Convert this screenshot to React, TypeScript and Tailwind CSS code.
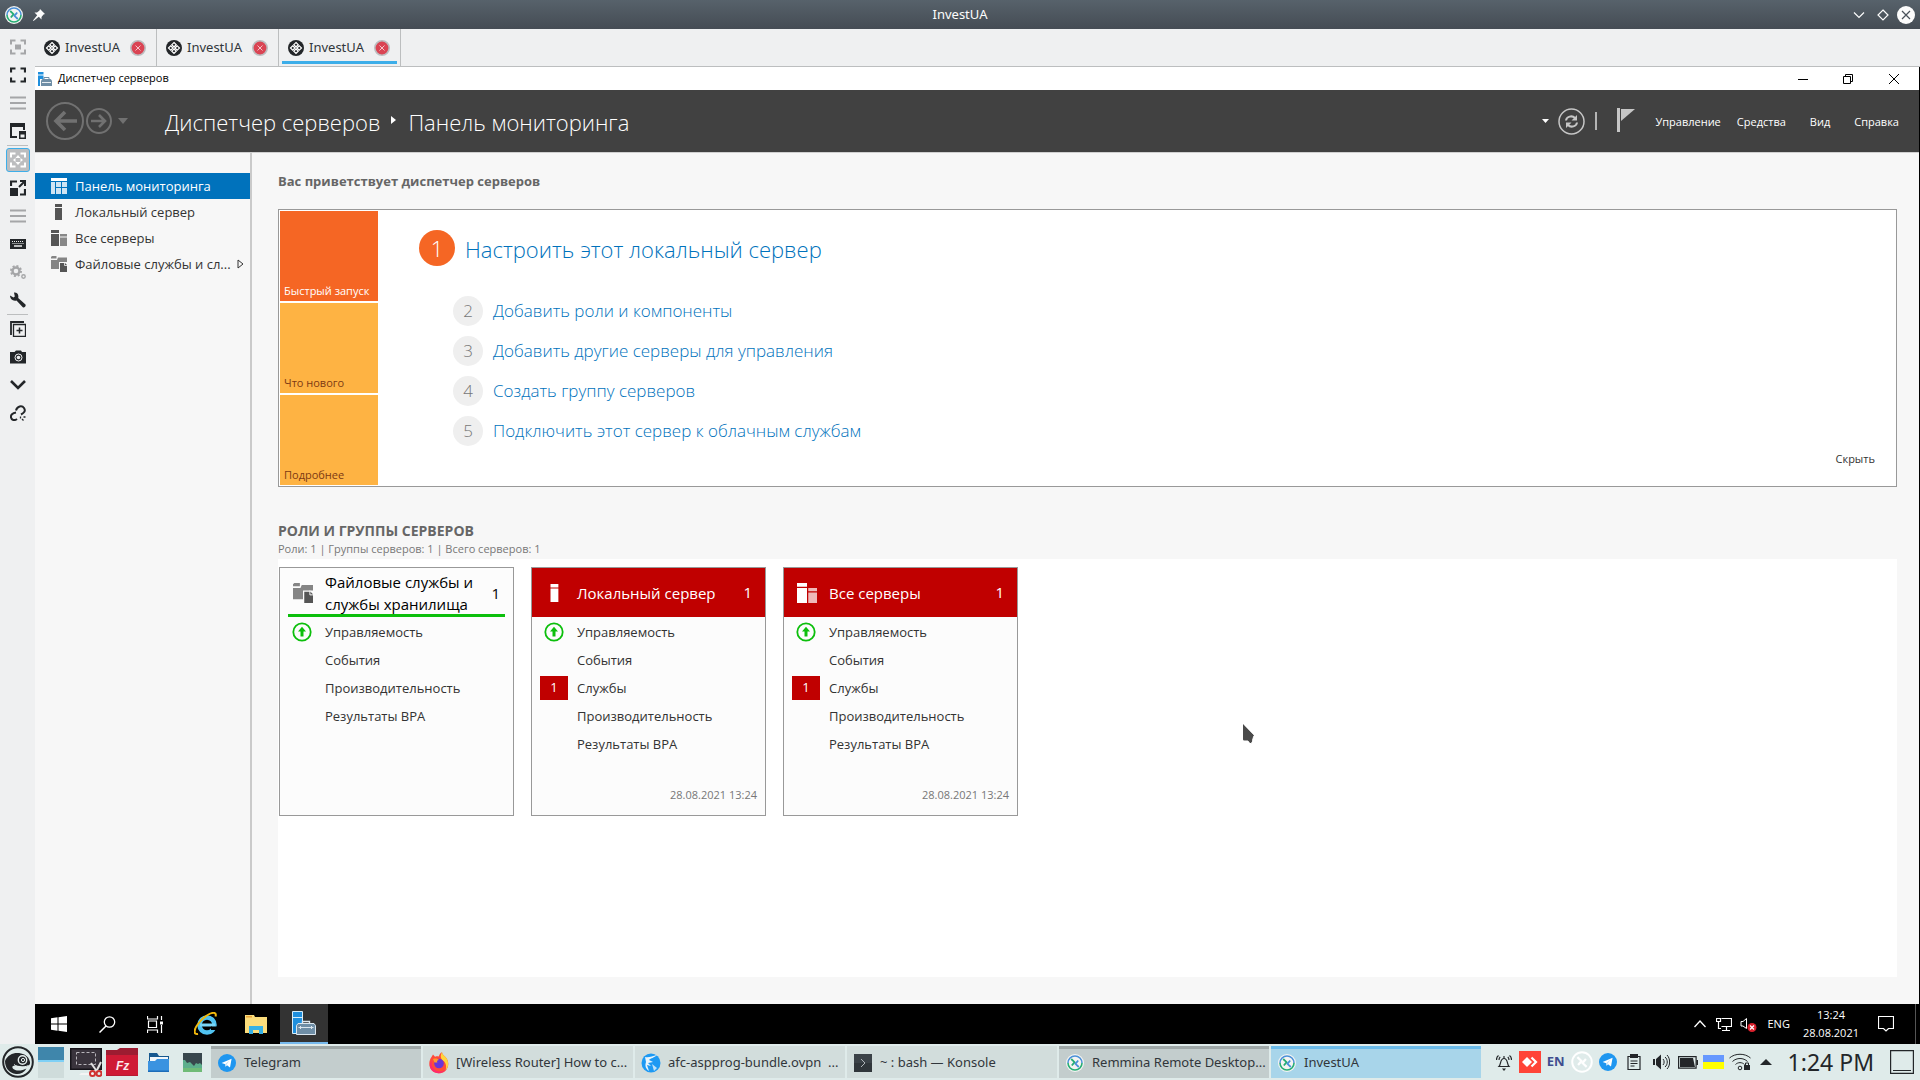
import type { ReactNode } from 'react';

const dark = '#232629';

function Svg({ w = 16, h, box, className, children }: { w?: number; h?: number; box?: string; className?: string; children: ReactNode }) {
    const height = h ?? w;
    return (
        <svg width={w} height={height} viewBox={box ?? `0 0 ${w} ${height}`} fill="none" className={`block shrink-0 ${className ?? ''}`} aria-hidden="true">
            {children}
        </svg>
    );
}

/* ---------- logos ---------- */

function RemminaLogo({ size = 18, mono = false }: { size?: number; mono?: boolean }) {
    return (
        <Svg w={size} box="0 0 18 18">
            {mono ? (
                <circle cx="9" cy="9" r="8" stroke="#fff" strokeWidth="1.6" />
            ) : (
                <>
                    <circle cx="9" cy="9" r="9" fill="#f4f4f2" />
                    <path d="M2 9a7 7 0 0 1 14 0" stroke="#4a90d9" strokeWidth="1.6" />
                    <path d="M2 9a7 7 0 0 0 14 0" stroke="#27ae75" strokeWidth="1.6" />
                </>
            )}
            <path d="M5.200 5 8.600 8.200 5.800 11.500" stroke={mono ? '#fff' : '#27ae75'} strokeWidth="1.8" />
            <path d="M12.200 6.500 9.400 9.800l3.400 3.200" stroke={mono ? '#fff' : '#4a90d9'} strokeWidth="1.8" />
        </Svg>
    );
}

function TelegramLogo({ size = 18 }: { size?: number }) {
    return (
        <Svg w={size} box="0 0 18 18">
            <circle cx="9" cy="9" r="9" fill="#1e96f0" />
            <path d="M3.6 8.9 13.6 4.8 12 13.4 9 11.2 7.6 12.8 7.2 10.2z" fill="#fff" />
            <path d="M7.2 10.2 11.6 6.6 8.4 10.8 7.6 12.8z" fill="#bcdcf5" />
        </Svg>
    );
}

function FirefoxLogo() {
    return (
        <Svg w={22} box="0 0 22 22">
            <path d="M3.5 5 5 2.6l2 2.2C9 4 10 4.300 11 4.500 11 3 12 1 14 .2c.2 2.500 2.500 3.500 4.500 6 3 4.500 2 10-1.500 13-4 3-10 2.600-13-.6C.6 15.200.4 9 3.500 5z" fill="#ff4b3a" />
            <path d="M14 .2c.2 2.500 2.500 3.500 4.500 6 2.600 4 2 9-.8 12 1-4 .3-8-3.200-10C13 7 11.800 3.500 14 .2z" fill="#ffd53d" />
            <path d="M4 8C2.500 13 5 17.500 9 19c3 1 6.500.4 9-1.500-3 4-9 5-13.500 1.500C1 16 1 11 4 8z" fill="#ff2a6d" />
            <circle cx="11" cy="11.500" r="4.800" fill="#6a35d8" />
            <path d="M5 7c3-1 5 0 6 1-2 0-2.500 1.500-1.500 2.500H6.500z" fill="#ff9a2b" />
        </Svg>
    );
}

function FalkonLogo() {
    return (
        <Svg w={20} box="0 0 20 20">
            <circle cx="10" cy="10" r="9.500" fill="#1d99f3" />
            <path d="M4 4c4 1 7-1 12-2-3 3-6 3-8 5l4 2-5 1 3 3-4-1 2 6c-4-3-4-6-3-9z" fill="#e8f4fc" />
            <path d="M11 11l5 4-3 3z" fill="#bfe2fa" />
        </Svg>
    );
}

function KonsoleLogo() {
    return (
        <Svg w={18} box="0 0 18 18">
            <path d="M0 0h18v18H0z" fill="#3b4248" />
            <path d="M0 9h18v9H0z" fill="#30363b" />
            <path d="m7 5 4 4-4 4" stroke="#aeb4b8" />
        </Svg>
    );
}

function ServerManagerLogo({ size = 24 }: { size?: number }) {
    return (
        <Svg w={size} box="0 0 24 24">
            <path d="M.5.500h10v22H.500z" fill="#1f8fdd" stroke="#d8eefa" />
            <path d="M1 6.500h9" stroke="#d8eefa" />
            <path d="M4.500 14.500 6 12.500h16l1.500 2v9h-19z" fill="#6f8ea6" stroke="#dbe6ee" />
            <path d="M10.500 12.500v-2h7v2" stroke="#dbe6ee" strokeWidth="1.400" />
            <path d="M6.500 16.500h15M8.500 15v3M19.500 15v3" stroke="#dbe6ee" />
        </Svg>
    );
}

/* ---------- server manager icons ---------- */

function DashboardIcon() {
    return (
        <Svg w={16}>
            <path d="M0 0h16v3H0z" fill="#fff" />
            <path d="M0 4h4v12H0zM5 4h5v5H5zM11 4h5v5h-5zM5 10h5v6H5zM11 10h5v6h-5z" fill="#cfe4f3" />
        </Svg>
    );
}

function ServerIcon({ size = 16, color = '#555' }: { size?: number; color?: string }) {
    return (
        <Svg w={size} box="0 0 16 16">
            <path d="M4 0h7v3H4zM4 4h7v12H4z" fill={color} />
        </Svg>
    );
}

function ServersIcon({ size = 16, color = '#555', second = '#888' }: { size?: number; color?: string; second?: string }) {
    return (
        <Svg w={size} box="0 0 16 16">
            <path d="M0 0h8v3H0zM0 4h8v12H0z" fill={color} />
            <path d="M9 4h7v2.500H9zM9 7.500h7V16H9z" fill={second} />
        </Svg>
    );
}

function FilesIcon({ size = 16 }: { size?: number }) {
    return (
        <Svg w={size} box="0 0 16 16">
            <path d="M0 1l1-1h4.500v2.500H0zM0 4h6l1-2.500h9V6H8v7H0z" fill="#858585" />
            <path d="M9 7h5l2 2v7H9z" fill="#555" />
            <path d="M13.500 6v3.500H16" stroke="#f5f5f5" strokeWidth=".8" />
        </Svg>
    );
}

function StatusUp() {
    return (
        <Svg w={20}>
            <circle cx="10" cy="10" r="8.700" stroke="#0cbf0c" strokeWidth="1.800" />
            <path d="M10 4.800 14 9.500h-2.500V14.500h-3V9.500H6z" fill="#0cbf0c" />
        </Svg>
    );
}

/* ---------- remote viewer chrome ---------- */

function TitleBar() {
    return (
        <header className="grid h-[29px] shrink-0 grid-cols-[1fr_auto_1fr] items-center bg-linear-to-b from-[#57626b] to-[#454c54] px-[5px] text-[#fcfcfc]">
            <div className="flex items-center gap-2.5">
                <RemminaLogo />
                <button aria-label="Keep above">
                    <Svg w={12}>
                        <path d="m7 0 5 5-1.500.5L8.500 8v2.500L5.800 7.800.5 12l-.5-.5L4.200 6.200 1.500 3.500H4L6.500 1.500z" fill="#fcfcfc" />
                    </Svg>
                </button>
            </div>
            <h1 className="text-[13px]">InvestUA</h1>
            <div className="flex items-center justify-end">
                <button aria-label="Minimize">
                    <Svg w={12}><path d="m1 3.500 5 5 5-5" stroke="#fcfcfc" strokeWidth="1.200" /></Svg>
                </button>
                <button aria-label="Maximize" className="mr-2 ml-3">
                    <Svg w={12}><path d="m6 1 5 5-5 5-5-5z" stroke="#fcfcfc" strokeWidth="1.200" /></Svg>
                </button>
                <button aria-label="Close">
                    <Svg w={18}>
                        <circle cx="9" cy="9" r="9" fill="#fcfcfc" />
                        <path d="m5 5 8 8m0-8-8 8" stroke="#4a525a" strokeWidth="1.200" />
                    </Svg>
                </button>
            </div>
        </header>
    );
}

const corners = 'M1 5.500V1.500h4.500M10.500 1.500H15v4M15 10.500v4h-4.500M5.500 14.500H1v-4';

function Lines() {
    return <Svg><path d="M0 2.500h16M0 8h16M0 13.500h16" stroke="#a5a6a8" strokeWidth="2.200" /></Svg>;
}

const toolsTop = [
    { label: 'Fit window', icon: <Svg><path d={corners} stroke="#a5a6a8" strokeWidth="2" /><path d="M5 5.500h6v5H5z" fill="#a5a6a8" /></Svg> },
    { label: 'Fullscreen', icon: <Svg><path d={corners} stroke={dark} strokeWidth="2.200" /></Svg> },
    { label: 'Multi monitor', icon: <Lines /> },
    { label: 'Dynamic resolution', icon: <Svg><path d="M0 0h15v4H0z" fill={dark} /><path d="M1 4v10h6M14 4v3" stroke={dark} strokeWidth="2" /><path d="M9 8h7v8H9z" fill={dark} /><path d="M10.500 11.500h4v3h-4z" fill="#eff0f1" /></Svg> },
];

const toolsMiddle = [
    { label: 'Scaled mode', icon: <Svg><path d={corners} stroke="#fff" strokeWidth="2" /><path d="M8 3l2.500 3h-5zM8 13l2.500-3h-5zM3 8l2.500-2v4zM13 8l-2.500-2v4z" fill="#fff" /></Svg>, active: true },
    { label: 'Grab keyboard', icon: <Svg><path d="M0 8h8v8H0z" fill={dark} /><path d="M1 6V1.500h6M15 9v5.500h-5" stroke={dark} strokeWidth="2.200" /><path d="m9 7 5.500-5.500M10 1h5v5" stroke={dark} strokeWidth="2" /></Svg> },
    { label: 'Preferences', icon: <Lines /> },
    { label: 'Keyboard', icon: <Svg><path d="M0 3h16v10H0z" fill={dark} /><path d="M2 5.500h12M2.500 7.500h11" stroke="#eff0f1" strokeDasharray="1 1" /><path d="M4 10h8" stroke="#eff0f1" strokeWidth="1.500" /></Svg> },
    { label: 'Plugins', icon: <Svg><circle cx="6" cy="7" r="3.500" stroke="#a5a6a8" strokeWidth="2.400" /><circle cx="6" cy="7" r="5" stroke="#a5a6a8" strokeWidth="2" strokeDasharray="2 1.900" /><circle cx="13.500" cy="12.500" r="1.700" stroke="#a5a6a8" strokeWidth="1.400" /></Svg> },
    { label: 'Tools', icon: <Svg><path d="M0 3.500 3.500 5.500 4.800 4.500 4 .5C7 .2 9 2.500 8.200 6l7.300 6.500c.8 1.500-1 3.500-2.700 2.700L6.500 8.500C3 9.500 0 7 0 3.500z" fill={dark} /></Svg> },
];

const toolsBottom = [
    { label: 'Duplicate', icon: <Svg><path d="M3.500 3.500h12v12h-12z" stroke={dark} strokeWidth="1.300" /><path d="M1 14V1h13" stroke={dark} strokeWidth="1.800" /><path d="M9.500 6.500v6M6.500 9.500h6" stroke={dark} strokeWidth="1.500" /></Svg> },
    { label: 'Screenshot', icon: <Svg><path d="M0 3h4.500L6 1.500h5L12 3h4v11.500H0z" fill={dark} /><circle cx="8.500" cy="8.500" r="3.500" stroke="#eff0f1" /><circle cx="8.500" cy="8.500" r="1.800" fill="#eff0f1" /></Svg> },
    { label: 'Minimize window', icon: <Svg><path d="m1 4 7 7 7-7" stroke={dark} strokeWidth="2.600" /></Svg> },
    { label: 'Disconnect', icon: <Svg><path d="M6 5.500C7 1 12 0 14 3s0 5-3 6.500M7 14C4.500 16 1.500 15 1 12.500S2.500 8 6 7.500" stroke={dark} strokeWidth="2" /><path d="M10.500 11.500v2M12 14l1.500 1.500M13.500 12h2" stroke={dark} strokeWidth="1.300" /></Svg> },
];

type Tool = { label: string; icon: ReactNode; active?: boolean };

function ToolGroup({ tools }: { tools: Tool[] }) {
    return (
        <>
            {tools.map(tool => (
                <div key={tool.label} className="flex h-7 items-center justify-center">
                    <button
                        aria-label={tool.label}
                        className={tool.active ? 'rounded-[3px] border border-[#3daee9] bg-[#bcbdbf] p-[3px]' : 'p-1'}
                    >
                        {tool.icon}
                    </button>
                </div>
            ))}
        </>
    );
}

function Toolbar() {
    return (
        <aside className="w-[35px] shrink-0 bg-[#eff0f1] pt-1">
            <ToolGroup tools={toolsTop} />
            <hr className="mx-[7px] border-[#bcbebf]" />
            <ToolGroup tools={toolsMiddle} />
            <hr className="mx-[7px] border-[#bcbebf]" />
            <ToolGroup tools={toolsBottom} />
        </aside>
    );
}

function ConnectionTabs() {
    return (
        <nav className="flex h-[38px] shrink-0 border-b border-[#bcbebf] bg-[#eff0f1]">
            {[0, 1, 2].map(tab => (
                <div key={tab} className="relative flex w-[122px] items-center border-r border-[#bcbebf] pt-px pl-[9px]">
                    <button className="flex items-center gap-[5px] text-[13px] text-[#31363b]">
                        <Svg w={16}>
                            <circle cx="8" cy="8" r="8" fill={dark} />
                            <path d="m8 2.500 2.200 2.200L8 7 5.800 4.700zM8 9l2.200 2.200L8 13.500l-2.200-2.300zM2.500 8l2.200-2.200L7 8l-2.300 2.200zM9 8l2.200-2.200L13.500 8l-2.300 2.200z" stroke="#fff" strokeWidth="1.200" />
                        </Svg>
                        InvestUA
                    </button>
                    <button aria-label="Close tab" className="ml-[10px]">
                        <Svg w={16}>
                            <circle cx="8" cy="8" r="7.200" fill="#da4453" stroke="#bcbec0" strokeWidth="1.600" />
                            <path d="m5.500 5.500 5 5m0-5-5 5" stroke="#f6c5ca" />
                        </Svg>
                    </button>
                    {tab === 2 && <span className="absolute right-[3px] bottom-[2px] left-[3px] h-[3px] bg-[#3daee9]" />}
                </div>
            ))}
        </nav>
    );
}

/* ---------- server manager window ---------- */

function WindowTitle() {
    return (
        <div className="flex h-[23px] shrink-0 items-center bg-white pl-[3px] text-black">
            <Svg w={14}>
                <path d="M0 0h5.500v2.500H0zM0 3.500h5.500V14H0z" fill="#1f8fdd" />
                <path d="M2 7h12v7H2z" fill="#fff" />
                <path d="M3 8.500 4.500 7h8L14 8.500V14H3z" fill="#6f8ea6" />
                <path d="M6 7V5.500h5V7" stroke="#6f8ea6" />
                <path d="M4 10.500h9" stroke="#e6edf2" />
            </Svg>
            <h2 className="ml-1.5 text-[11px]">Диспетчер серверов</h2>
            <div className="ml-auto flex items-center pr-5">
                <button aria-label="Свернуть" className="mr-[35px]"><Svg w={10}><path d="M0 5.500h10" stroke="#000" /></Svg></button>
                <button aria-label="Восстановить" className="mr-[36px]"><Svg w={10}><path d="M.5 2.500h7v7h-7zM2.500 2.500V.500h7v7h-2" stroke="#000" /></Svg></button>
                <button aria-label="Закрыть"><Svg w={10}><path d="m0 0 10 10M10 0 0 10" stroke="#000" /></Svg></button>
            </div>
        </div>
    );
}

function Ribbon() {
    return (
        <div className="flex h-[62px] shrink-0 items-center bg-[#414141] text-white">
            <div className="flex w-[130px] items-center gap-0.5 pl-[11px]">
                <button aria-label="Назад">
                    <Svg w={38}>
                        <circle cx="19" cy="19" r="18" stroke="#717171" strokeWidth="2" />
                        <path d="M31 19H10m9-9-9 9 9 9" stroke="#717171" strokeWidth="3.600" />
                    </Svg>
                </button>
                <button aria-label="Вперед">
                    <Svg w={26}>
                        <circle cx="13" cy="13" r="12" stroke="#717171" strokeWidth="2" />
                        <path d="M5 13h14m-6-6 6 6-6 6" stroke="#717171" strokeWidth="2.600" />
                    </Svg>
                </button>
                <button aria-label="Журнал" className="ml-1">
                    <Svg w={10} h={6}><path d="M0 0h10L5 6z" fill="#717171" /></Svg>
                </button>
            </div>
            <div className="flex items-center pt-0.5 text-[22px] font-light">
                <a href="#manager">Диспетчер серверов</a>
                <Svg w={6} h={8} className="mx-[11px] mb-1"><path d="m0 0 5 4-5 4z" fill="#fff" /></Svg>
                <a href="#dashboard">Панель мониторинга</a>
            </div>
            <div className="ml-auto flex items-center text-[11px]">
                <button aria-label="Список"><Svg w={8} h={4}><path d="M0 0h7L3.500 4z" fill="#fff" /></Svg></button>
                <button aria-label="Обновить" className="ml-2">
                    <Svg w={27}>
                        <circle cx="13.500" cy="13.500" r="12.500" stroke="#c6c6c6" strokeWidth="1.500" />
                        <path d="M8 12.500c.5-4 6-5.500 9-2.500M19 14.500c-.5 4-6 5.500-9 2.500" stroke="#c6c6c6" strokeWidth="2" />
                        <path d="M19 7v5.500h-5.500zM8 20v-5.500h5.500z" fill="#c6c6c6" />
                    </Svg>
                </button>
                <span className="ml-[10px] h-[18px] w-[2px] bg-[#b4b4b4]" />
                <button aria-label="Уведомления" className="ml-5">
                    <Svg w={18} h={26}>
                        <path d="M0 0h3v24H0z" fill="#c6c6c6" />
                        <path d="M4 1h14L4 13z" fill="#c6c6c6" />
                    </Svg>
                </button>
                <div className="flex gap-4 pt-0.5 pr-5 pl-5">
                    <button>Управление</button>
                    <button>Средства</button>
                    <button className="mx-2">Вид</button>
                    <button>Справка</button>
                </div>
            </div>
        </div>
    );
}

function Sidebar() {
    const items = [
        { label: 'Панель мониторинга', icon: <DashboardIcon />, active: true },
        { label: 'Локальный сервер', icon: <ServerIcon /> },
        { label: 'Все серверы', icon: <ServersIcon /> },
        { label: 'Файловые службы и сл...', icon: <FilesIcon />, more: true },
    ];
    return (
        <nav className="w-[217px] shrink-0 border-r-2 border-[#cacaca] pt-5">
            {items.map(item => (
                <a
                    key={item.label}
                    href="#"
                    className={`flex h-[26px] items-center pl-4 text-[13px] whitespace-nowrap ${item.active ? 'bg-[#0072bc] text-white' : 'text-[#333]'}`}
                >
                    {item.icon}
                    <span className="ml-2 pt-0.5">{item.label}</span>
                    {item.more && <Svg w={7} h={10} className="ml-1.5"><path d="M1 1v8l5-4z" stroke="#333" /></Svg>}
                </a>
            ))}
        </nav>
    );
}

function Welcome() {
    const tiles = [
        { label: 'Быстрый запуск', style: 'bg-[#f56624] text-white' },
        { label: 'Что нового', style: 'bg-[#feb343] text-[#7d3a13]' },
        { label: 'Подробнее', style: 'bg-[#feb343] text-[#7d3a13]' },
    ];
    const steps = ['Добавить роли и компоненты', 'Добавить другие серверы для управления', 'Создать группу серверов', 'Подключить этот сервер к облачным службам'];
    return (
        <section className="flex border border-[#999] bg-white p-px">
            <div className="flex flex-col gap-0.5">
                {tiles.map(tile => (
                    <button key={tile.label} className={`flex h-[90px] w-[98px] items-end px-1 pb-0.5 text-[11px] whitespace-nowrap ${tile.style}`}>
                        {tile.label}
                    </button>
                ))}
            </div>
            <ol className="grow pt-[19px] pl-[41px] font-light text-[#0072bc]">
                <li className="mb-[30px] flex h-9 items-center gap-[10px] text-[22px]">
                    <span className="grid size-9 place-items-center rounded-full bg-[#f56624] text-white">1</span>
                    <a href="#step1" className="pt-0.5">Настроить этот локальный сервер</a>
                </li>
                {steps.map((step, i) => (
                    <li key={step} className="mb-[10px] flex h-[30px] items-center gap-[10px] pl-[34px] text-[17px]">
                        <span className="grid size-[30px] place-items-center rounded-full bg-[#efefef] text-[#777]">{i + 2}</span>
                        <a href="#step">{step}</a>
                    </li>
                ))}
            </ol>
            <button className="self-end pr-5 pb-[18px] text-[11px] text-[#333]">Скрыть</button>
        </section>
    );
}

type Row = { label: string; status?: 'up' | number };

const fileRows: Row[] = [{ label: 'Управляемость', status: 'up' }, { label: 'События' }, { label: 'Производительность' }, { label: 'Результаты BPA' }];
const serverRows: Row[] = [{ label: 'Управляемость', status: 'up' }, { label: 'События' }, { label: 'Службы', status: 1 }, { label: 'Производительность' }, { label: 'Результаты BPA' }];

const cards = [
    { title: 'Файловые службы и службы хранилища', icon: <FilesIcon size={20} />, rows: fileRows },
    { title: 'Локальный сервер', icon: <ServerIcon size={18} color="#fff" />, rows: serverRows, alert: true, time: '28.08.2021 13:24' },
    { title: 'Все серверы', icon: <ServersIcon size={20} color="#fff" second="#efb9b9" />, rows: serverRows, alert: true, time: '28.08.2021 13:24' },
];

function RoleCard({ card }: { card: (typeof cards)[number] }) {
    return (
        <article className="flex h-[249px] w-[235px] flex-col border border-[#999] bg-[#fcfcfc]">
            <header className={card.alert ? 'bg-[#c00000] px-2 text-white' : 'px-2 text-black'}>
                <div className={`flex h-[49px] items-center ${card.alert ? '' : 'border-b-[3px] border-[#0cbf0c] pt-1'}`}>
                    <span className="flex w-[30px] justify-center">{card.icon}</span>
                    <h4 className="ml-[7px] w-[155px] text-[15px] leading-[22px]">{card.title}</h4>
                    <span className="ml-auto pr-[5px] text-[15px]">1</span>
                </div>
            </header>
            <ul className="pt-px text-[13px] text-[#333]">
                {card.rows.map(row => (
                    <li key={row.label} className="flex h-7 items-center px-2">
                        <span className="flex w-7 justify-center">
                            {row.status === 'up' && <StatusUp />}
                            {typeof row.status === 'number' && <span className="grid h-6 w-7 place-items-center bg-[#c00000] text-white">{row.status}</span>}
                        </span>
                        <a href="#row" className="ml-[9px] pt-0.5">{row.label}</a>
                    </li>
                ))}
            </ul>
            {card.time && <time className="mt-auto self-end pr-2 pb-3 text-[11px] text-[#777]">{card.time}</time>}
        </article>
    );
}

function Dashboard() {
    return (
        <main className="flex grow flex-col pt-[18px] pr-[22px] pb-[27px] pl-[26px]">
            <h3 className="text-[13px] leading-5 font-bold text-[#666]">Вас приветствует диспетчер серверов</h3>
            <div className="mt-[18px]">
                <Welcome />
            </div>
            <h3 className="mt-[34px] text-[14px] leading-5 font-bold text-[#666]">РОЛИ И ГРУППЫ СЕРВЕРОВ</h3>
            <p className="text-[11px] leading-4 text-[#777]">Роли: 1 | Группы серверов: 1 | Всего серверов: 1</p>
            <section className="relative mt-[2px] flex grow items-start gap-[17px] bg-white px-px py-2">
                {cards.map(card => <RoleCard key={card.title} card={card} />)}
                <Svg w={14} h={22} className="absolute top-[164px] left-[964px]">
                    <path d="M1 1v17h5l3 3 1.500-3.500L12 12z" fill="#4a4a4a" stroke="#fff" />
                    <path d="M1 1v16l4-1 3 4 2-1-.5-4 2.500-2.500z" fill="#4a4a4a" />
                </Svg>
            </section>
        </main>
    );
}

function WindowsTaskbar() {
    return (
        <footer className="flex h-10 shrink-0 items-center bg-black text-[11px] text-white">
            <button aria-label="Пуск" className="grid h-10 w-12 place-items-center">
                <Svg w={16}><path d="M0 2.200 6.500 1.300v6.200H0zM7.500 1.200 16 0v7.500H7.500zM0 8.500h6.500v6.200L0 13.800zM7.500 8.500H16V16l-8.500-1.200z" fill="#fff" /></Svg>
            </button>
            <button aria-label="Поиск" className="grid h-10 w-12 place-items-center">
                <Svg w={17}><circle cx="10.500" cy="6" r="5.200" stroke="#fff" strokeWidth="1.300" /><path d="m7 10-6.500 6.500" stroke="#fff" strokeWidth="1.500" /></Svg>
            </button>
            <button aria-label="Представление задач" className="grid h-10 w-12 place-items-center">
                <Svg w={17}><path d="M.5 0v3h10V0M.5 17v-3h10v3M1.500 5h8v6.500h-8zM14.500 0v4M14.500 9v8" stroke="#fff" strokeWidth="1.200" /><path d="M13 5.500h3v3h-3z" fill="#fff" /></Svg>
            </button>
            <button aria-label="Internet Explorer" className="grid h-10 w-[53px] place-items-center">
                <Svg w={24}>
                    <circle cx="13" cy="13" r="7.500" stroke="#51c3f1" strokeWidth="4.500" />
                    <path d="M6 13h15" stroke="#7ad6f7" strokeWidth="3" />
                    <path d="M17 14.500h7v3.500h-7z" fill="#000" />
                    <path d="M4 22C-1 23 0 17 4 12 9 5 17 0 20.500 1c1.500.5 1.500 2 1 3.500" stroke="#f2b90c" strokeWidth="2" />
                </Svg>
            </button>
            <button aria-label="Проводник" className="grid h-10 w-12 place-items-center">
                <Svg w={22} h={19}>
                    <path d="M0 0h9l1 2h12v16H0z" fill="#fbdd7c" />
                    <path d="M1 1h6v1.500H1z" fill="#e8a33a" />
                    <path d="M4 19v-8h14v8h-4v-4H8v4z" fill="#36b1e6" />
                </Svg>
            </button>
            <button aria-label="Диспетчер серверов" className="grid h-10 w-12 place-items-center border-b-2 border-[#76b9ed] bg-[#333]">
                <ServerManagerLogo />
            </button>
            <div className="ml-auto flex items-center">
                <button aria-label="Скрытые значки"><Svg w={12} h={8}><path d="m.5 7 5.500-6 5.500 6" stroke="#fff" strokeWidth="1.300" /></Svg></button>
                <Svg w={16} h={15} className="ml-[10px]"><path d="M5.500 1.500h10v8h-10M10.500 9.500v4M6 13.500h8M.5 1.500h4v3h-4zM2.500 4.500v7H5" stroke="#fff" strokeWidth="1.200" /></Svg>
                <Svg w={17} h={15} className="ml-2">
                    <path d="M6.500 1.500v10L3 9H1V4.500h2z" stroke="#fff" />
                    <circle cx="12" cy="10.500" r="4.500" fill="#d9202c" />
                    <path d="m10 8.500 4 4m0-4-4 4" stroke="#fff" strokeWidth="1.200" />
                </Svg>
                <button className="ml-2.5">ENG</button>
                <time className="ml-[13px] text-center leading-[18px]">
                    13:24
                    <br />
                    28.08.2021
                </time>
                <button aria-label="Центр уведомлений" className="ml-[19px]">
                    <Svg w={16}><path d="M.5.500h15v12h-5L8 15l-2.500-2.500h-5z" stroke="#fff" strokeWidth="1.200" /></Svg>
                </button>
                <span className="ml-[21px] h-10 w-px bg-[#555]" />
                <span className="w-1" />
            </div>
        </footer>
    );
}

/* ---------- desktop panel ---------- */

const tasks = [
    { title: 'Telegram', icon: <TelegramLogo />, style: 'bg-[#c3cdcd] border-[#9fa8a8]' },
    { title: '[Wireless Router] How to c...', icon: <FirefoxLogo />, style: 'bg-[#d2dddc] border-[#d2dddc]' },
    { title: 'afc-aspprog-bundle.ovpn  ...', icon: <FalkonLogo />, style: 'bg-[#d2dddc] border-[#d2dddc]' },
    { title: '~ : bash — Konsole', icon: <KonsoleLogo />, style: 'bg-[#d2dddc] border-[#d2dddc]' },
    { title: 'Remmina Remote Desktop...', icon: <RemminaLogo />, style: 'bg-[#c3cdcd] border-[#9fa8a8]' },
    { title: 'InvestUA', icon: <RemminaLogo />, style: 'bg-[#a8d5ea] border-[#6bbceb]' },
];

function Launchers() {
    return (
        <div className="flex h-9 w-[211px] shrink-0 items-center pl-[2px]">
            <button aria-label="Application menu">
                <Svg w={32}>
                    <circle cx="16" cy="16" r="14.800" stroke={dark} strokeWidth="2" />
                    <path d="M3 15C6 8 13 6 19 7.500c5 1 8 4 9 8.500.5 3-2 4.500-5 4.500-5 0-9-2-12-.5-2 1.500 1 4 4 4.500 3 .4 7-.5 9.500-2C22 26.500 18 28.500 14 28 7 27 3 22 3 15z" fill={dark} />
                    <circle cx="20.500" cy="14" r="4.200" fill={dark} stroke="#e6efee" strokeWidth="1.400" />
                    <circle cx="21" cy="14" r="1.600" stroke="#e6efee" />
                    <path d="M12 18.500c4 3.500 10 3 14.500 1" stroke="#e6efee" />
                </Svg>
            </button>
            <div className="ml-1 flex w-[26px] flex-col">
                <button aria-label="Desktop 1" className="h-[15px] border-b-2 border-[#7fd0f5] bg-[#3f86ab]" />
                <button aria-label="Desktop 2" className="h-4 bg-[#cfdcdb]" />
            </div>
            <button aria-label="Screen capture" className="ml-1.5">
                <Svg w={32} h={30}>
                    <path d="M0 1h32v22H0z" fill="#16141a" />
                    <path d="M1.500 2.500h29v19h-29z" fill="#3a343d" />
                    <path d="M6.500 5.500h19v12h-19z" stroke="#b8b5bb" strokeDasharray="3 2" />
                    <path d="M11 26h12l2 2H9z" fill="#f4f4f4" />
                    <path d="m21 16 7 10M31 15l-5 10" stroke="#e2e2e2" strokeWidth="2" />
                    <circle cx="22.500" cy="26.500" r="2.500" stroke="#d0312f" strokeWidth="2" />
                    <circle cx="29" cy="26.500" r="2.500" stroke="#d0312f" strokeWidth="2" />
                </Svg>
            </button>
            <button aria-label="FileZilla" className="ml-1">
                <Svg w={32} h={28}>
                    <path d="M0 2h11l3-2h18v28H0z" fill="#9d1c31" />
                    <path d="M0 7h32v20.500H0z" fill="#cf1a35" />
                    <text x="10" y="22" fill="#fbe9ec" fontSize="12" fontStyle="italic" fontWeight="700" fontFamily="Liberation Sans">Fz</text>
                </Svg>
            </button>
            <button aria-label="File manager" className="ml-[10px]">
                <Svg w={21} h={19}>
                    <path d="M1 0h8l2 3h10v10H1z" fill="#17588f" />
                    <path d="M2 4h18v6H2z" fill="#f2f7fb" />
                    <path d="M0 8h7l2-2h12v13H0z" fill="#3b93e0" />
                    <path d="M0 17.500h21V19H0z" fill="#1c6cb8" />
                </Svg>
            </button>
            <button aria-label="System monitor" className="ml-[14px]">
                <Svg w={19}>
                    <path d="M0 0h19v19H0z" fill="#38474d" />
                    <path d="M0 7l2 0 2 3 3-1 4 4 2-3 2 1 2-1 2 2v7H0z" fill="#5cae8c" />
                    <path d="M0 15h19v4H0z" fill="#6fbb77" />
                </Svg>
            </button>
        </div>
    );
}

function SystemTray() {
    return (
        <div className="ml-auto flex shrink-0 items-center pr-1.5">
            <Svg w={16} h={17}><path d="M3 12.500c2-2 1-8 5-8s3 6 5 8zM8 4V2M.5 6C.5 4 1 2.500 2.500 1.500M3 6c0-1.500.3-2.300 1.200-3M15.500 6c0-2-.5-3.500-2-4.500M13 6c0-1.500-.3-2.300-1.200-3" stroke={dark} strokeWidth="1.200" /><path d="M6 14.500h4l-2 2.500z" fill={dark} /></Svg>
            <Svg w={22} className="ml-[7px]"><path d="M0 0h22v22H0z" fill="#ff4438" /><path d="m8 6 5 5-5 5-5-5z" fill="#fff" /><path d="m12.500 6.500 4.500 4.500-4.500 4.500" stroke="#fff" strokeWidth="2.200" /></Svg>
            <button className="w-[30px] text-center text-[13px] font-bold text-[#3f4d8f]">EN</button>
            <RemminaLogo size={22} mono />
            <span className="ml-1.5"><TelegramLogo /></span>
            <Svg w={14} h={16} className="ml-[10px]"><path d="M1 2.500h12v13H1zM3.500 7h7M3.500 9.500h7M3.500 12h4" stroke={dark} strokeWidth="1.200" /><path d="M3 0h8v4H3z" fill={dark} /></Svg>
            <Svg w={17} h={16} className="ml-3"><path d="M0 5h2v6H0zM3 5l5-4.500v15L3 11z" fill={dark} /><path d="M10 5c1.500 1.500 1.500 4.500 0 6M12 3c3 2.500 3 7.500 0 10M14 1c3.500 3.500 3.500 10.500 0 14" stroke={dark} /></Svg>
            <Svg w={20} h={13} className="ml-2"><path d="M.6.600h17.500v11.500H.6zM19.400 4v5" stroke={dark} strokeWidth="1.200" /><path d="M2 2h13l2 9H2z" fill={dark} /></Svg>
            <Svg w={21} h={14} className="ml-[5px]"><path d="M0 0h21v7H0z" fill="#6698ff" /><path d="M0 7h21v7H0z" fill="#ff0" /></Svg>
            <Svg w={22} h={18} className="ml-[5px]"><path d="M.5 5C6 0 16 0 21.500 5M3.500 8.500c4-4 11-4 15 0M6.500 11.500c2.500-2.500 6.500-2.500 9 0" stroke={dark} /><circle cx="11" cy="15" r="1.800" stroke={dark} /><path d="M15 12h6v5h-6z" fill={dark} /><path d="M16.500 12v-2h3v2" stroke={dark} /></Svg>
            <button aria-label="Show hidden icons" className="ml-[9px]"><Svg w={12} h={6}><path d="M6 0l6 6H0z" fill={dark} /></Svg></button>
            <time className="ml-4 text-[23px] leading-9 text-[#232629]">1:24 PM</time>
            <button aria-label="Show desktop" className="ml-[16px]"><Svg w={24}><path d="M.6.600h22.800v22.800H.6zM3 20.500h18" stroke={dark} strokeWidth="1.200" /></Svg></button>
        </div>
    );
}

function DesktopPanel() {
    return (
        <footer className="flex h-9 shrink-0 items-center bg-[#dfebea]">
            <Launchers />
            <div className="flex w-[1270px] gap-0.5">
                {tasks.map((task, i) => (
                    <button key={i} className={`flex h-8 min-w-0 flex-1 items-center gap-2 border-t-[3px] pb-0.5 pl-[7px] text-[13px] whitespace-pre text-[#31363b] ${task.style}`}>
                        <span className="flex w-[18px] shrink-0 justify-center">{task.icon}</span>
                        {task.title}
                    </button>
                ))}
            </div>
            <SystemTray />
        </footer>
    );
}

export default function App() {
    return (
        <div className="flex min-h-screen flex-col bg-[#eff0f1] font-['Noto_Sans','Open_Sans',sans-serif]">
            <TitleBar />
            <div className="flex grow">
                <Toolbar />
                <div className="flex min-w-0 grow flex-col">
                    <ConnectionTabs />
                    <div className="flex grow flex-col font-['Open_Sans','Noto_Sans',sans-serif]">
                        <div className="flex grow flex-col border-r border-black">
                            <WindowTitle />
                            <Ribbon />
                            <div className="flex grow border-t border-[#d0d0d0] bg-[#f7f7f7]">
                                <Sidebar />
                                <Dashboard />
                            </div>
                        </div>
                        <WindowsTaskbar />
                    </div>
                </div>
            </div>
            <DesktopPanel />
        </div>
    );
}
